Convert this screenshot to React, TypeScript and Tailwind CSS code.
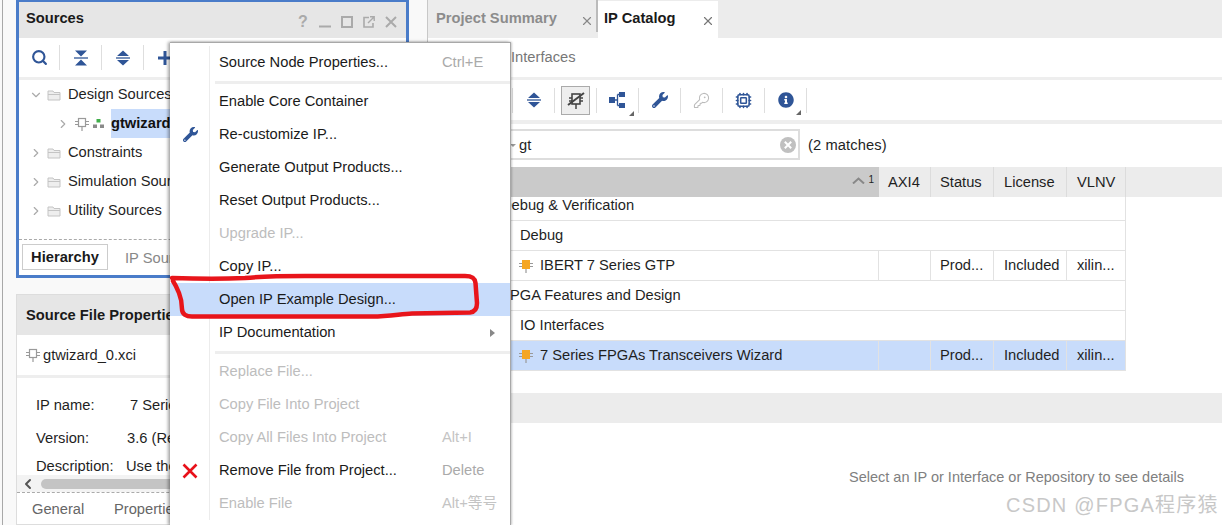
import React from "react";
import { FaWrench, FaInfoCircle } from "react-icons/fa";
import { Search, Cpu, KeyRound, ChevronRight, ChevronDown, ChevronLeft, X } from "lucide-react";

const BLUE = "#2f5597";

function IpIcon({ fill = "none", stroke = "#9a9a9a" }: { fill?: string; stroke?: string }) {
  return (
    <svg width="14" height="14" viewBox="0 0 14 14" className="shrink-0">
      <path d="M0 4.500h3M0 7.500h3M11 4.500h3M11 7.500h3M7 10v4" stroke={stroke} strokeWidth="1.2" fill="none" />
      {fill === "none" ? (
        <rect x="3.500" y="1.500" width="7" height="8" fill="none" stroke={stroke} strokeWidth="1.2" />
      ) : (
        <rect x="3" y="1" width="8" height="9" fill={fill} />
      )}
    </svg>
  );
}

function Folder() {
  return (
    <svg width="14" height="12" viewBox="0 0 14 12" className="shrink-0">
      <path d="M1 2h5l1 1.500h6V11H1z" fill="#eeeeee" stroke="#c4c4c4" strokeWidth="1" />
      <path d="M1 5.500h12" stroke="#c4c4c4" strokeWidth="1" />
    </svg>
  );
}

function Collapse() {
  return (
    <svg width="14" height="16" viewBox="0 0 14 16">
      <path d="M1 .5h12L7 6.500zM1 15.500h12L7 9.500z" fill={BLUE} />
      <path d="M0 8h14" stroke={BLUE} strokeWidth="1.3" />
    </svg>
  );
}

function Expand() {
  return (
    <svg width="14" height="16" viewBox="0 0 14 16">
      <path d="M7 .5L13 6H1zM7 15.500L13 10H1z" fill={BLUE} />
      <path d="M0 8h14" stroke={BLUE} strokeWidth="1.3" />
    </svg>
  );
}

function Plus() {
  return (
    <svg width="14" height="14" viewBox="0 0 14 14">
      <path d="M7 0v14M0 7h14" stroke={BLUE} strokeWidth="3" />
    </svg>
  );
}

function Corner() {
  return <span className="absolute right-[-7px] bottom-[-7px] w-0 h-0 border-l-[5px] border-l-transparent border-b-[5px] border-b-[#666]" />;
}

function ToolBtn({ children, w = "w-[42px]", corner }: { children?: React.ReactNode; w?: string; corner?: boolean }) {
  return (
    <div className={`${w} h-[25px] flex items-center justify-center border-r border-[#dedede] shrink-0`}>
      <div className="relative flex items-center justify-center">
        {children}
        {corner && <Corner />}
      </div>
    </div>
  );
}

function WinBtns() {
  return (
    <div className="flex items-center gap-[10px] text-[#aaaaaa] mt-[3px]">
      <span className="text-[16px] font-bold w-[12px] text-center">?</span>
      <svg width="12" height="12" viewBox="0 0 12 12"><path d="M0 10.500h12" stroke="#aaaaaa" strokeWidth="2" /></svg>
      <svg width="12" height="12" viewBox="0 0 12 12"><rect x="1" y="1" width="10" height="10" fill="none" stroke="#aaaaaa" strokeWidth="2" /></svg>
      <svg width="12" height="12" viewBox="0 0 12 12"><path d="M6 1.500H1v9.500h9V7" fill="none" stroke="#aaaaaa" strokeWidth="1.6" /><path d="M5 7l6-6M7 .8h4.200V5" fill="none" stroke="#aaaaaa" strokeWidth="1.4" /></svg>
      <svg width="12" height="12" viewBox="0 0 12 12"><path d="M1 1l10 10M11 1L1 11" stroke="#aaaaaa" strokeWidth="2" /></svg>
    </div>
  );
}

function TreeRow({ label, open }: { label: string; open?: boolean }) {
  return (
    <div className="h-[29px] flex items-center pl-[10px] whitespace-nowrap">
      {open ? <ChevronDown size={14} color="#aaaaaa" /> : <ChevronRight size={14} color="#aaaaaa" />}
      <span className="w-[4px]" />
      <Folder />
      <span className="ml-[7px]">{label}</span>
    </div>
  );
}

type Item = { t?: string; k?: string; off?: boolean; hi?: boolean; icon?: React.ReactNode; sub?: boolean; sep?: number };

const menu: Item[] = [
  { t: "Source Node Properties...", k: "Ctrl+E" },
  { sep: 6 },
  { t: "Enable Core Container" },
  { t: "Re-customize IP...", icon: <FaWrench size={15} color={BLUE} /> },
  { t: "Generate Output Products..." },
  { t: "Reset Output Products..." },
  { t: "Upgrade IP...", off: true },
  { t: "Copy IP..." },
  { t: "Open IP Example Design...", hi: true },
  { t: "IP Documentation", sub: true },
  { sep: 6 },
  { t: "Replace File...", off: true },
  { t: "Copy File Into Project", off: true },
  { t: "Copy All Files Into Project", k: "Alt+I", off: true },
  {
    t: "Remove File from Project...",
    k: "Delete",
    icon: (
      <svg width="16" height="16" viewBox="0 0 16 16">
        <path d="M1.500 1.500l13 13M14.500 1.500l-13 13" stroke="#e8111a" strokeWidth="2.6" />
      </svg>
    ),
  },
  { t: "Enable File", k: "Alt+等号", off: true },
];

function Menu() {
  return (
    <div className="absolute left-[170px] top-[42px] w-[341px] h-[483px] bg-white border-t border-r border-[#a8a8a8] shadow-[-2px_0_3px_rgba(0,0,0,0.35),1px_0_2px_rgba(0,0,0,0.2)] pt-[3px] text-[#1a1a1a]">
      {menu.map((m, i) =>
        m.sep ? (
          <div key={i} className="flex" style={{ height: m.sep }}>
            <div className="w-[40px] border-r border-[#ececec]" />
            <div className="flex-1 flex items-center pl-[5px]">
              <div className="w-full h-[3px] bg-[#eeeeee]" />
            </div>
          </div>
        ) : (
          <div key={i} className={`h-[33px] flex items-center ${m.hi ? "bg-[#c8dcfb]" : ""}`}>
            <div className={`w-[40px] h-full flex items-center justify-center pl-[1px] border-r ${m.hi ? "border-transparent" : "border-[#ececec]"}`}>
              {m.icon}
            </div>
            <span className={`ml-[9px] w-[223px] whitespace-nowrap ${m.off ? "text-[#bdbdbd]" : ""}`}>{m.t}</span>
            {m.k && <span className={`whitespace-nowrap ${m.off ? "text-[#c4c4c4]" : "text-[#aaaaaa]"}`}>{m.k}</span>}
            {m.sub && <span className="ml-auto mr-[15px] w-0 h-0 border-y-[4px] border-y-transparent border-l-[5px] border-l-[#888]" />}
          </div>
        )
      )}
    </div>
  );
}

const cols = "grid grid-cols-[451px_52px_63px_73px_59px] w-[698px]";

function Cells({ hi, prod, children }: { hi?: boolean; prod?: boolean; children: React.ReactNode }) {
  return (
    <div className={`${cols} h-[30px] border-b border-[#e2e2e2] border-r ${hi ? "bg-[#c8dcfb]" : ""}`}>
      <div className={`flex items-center whitespace-nowrap ${prod ? "border-r border-[#e2e2e2]" : ""}`}>{children}</div>
      {prod ? (
        <>
          <div className="border-r border-[#e2e2e2]" />
          <div className="flex items-center pl-[9px] border-r border-[#e2e2e2]">Prod...</div>
          <div className="flex items-center pl-[10px] border-r border-[#e2e2e2]">Included</div>
          <div className="flex items-center pl-[10px]">xilin...</div>
        </>
      ) : null}
    </div>
  );
}

export default function App() {
  return (
    <div
      className="relative w-[1222px] h-[525px] overflow-hidden flex bg-[#f9f9f9] text-[14.7px] text-[#1f1f1f]"
      style={{ fontFamily: '"Liberation Sans","Noto Sans CJK SC",sans-serif' }}
    >
      {/* left strip */}
      <div className="w-[16px] shrink-0 pl-[2px]">
        <div className="w-px h-full bg-[#a8a8a8]" />
      </div>

      {/* left column */}
      <div className="w-[393px] shrink-0 flex flex-col">
        <div className="h-[278px] bg-white border-x-[3px] border-b-[3px] border-t-[2px] border-[#4a7cc9] flex flex-col shrink-0">
          <div className="h-[36px] bg-[#e6e6e6] flex items-center justify-between pl-[7px] pr-[9px] shrink-0">
            <span className="font-bold text-[#1a1a1a] -mt-[4px]">Sources</span>
            <WinBtns />
          </div>
          <div className="h-[39px] flex items-center shrink-0">
            <ToolBtn w="w-[41px]"><Search size={17} strokeWidth={3} color={BLUE} /></ToolBtn>
            <ToolBtn><Collapse /></ToolBtn>
            <ToolBtn><Expand /></ToolBtn>
            <ToolBtn><Plus /></ToolBtn>
          </div>
          <div className="h-[3px] bg-[#eeeeee] shrink-0" />
          <div className="h-[159px] shrink-0 overflow-hidden">
            <TreeRow label="Design Sources" open />
            <div className="h-[29px] flex items-center pl-[37px] whitespace-nowrap">
              <ChevronRight size={14} color="#aaaaaa" />
              <span className="w-[5px]" />
              <IpIcon />
              <svg width="11" height="9" viewBox="0 0 11 9" className="ml-[4px]">
                <rect x="3.500" y="0" width="4" height="3.500" fill="#3fae49" />
                <rect x="0" y="5.500" width="4" height="3.500" fill="#8a8a8a" />
                <rect x="7" y="5.500" width="4" height="3.500" fill="#8a8a8a" />
              </svg>
              <span className="ml-[7px] h-full flex-1 bg-[#c8dcfb] flex items-center font-bold text-[#111]">gtwizard_0</span>
            </div>
            <TreeRow label="Constraints" />
            <TreeRow label="Simulation Sources" />
            <TreeRow label="Utility Sources" />
          </div>
          <div className="flex-1 border-t border-dashed border-[#aaaaaa] pl-[3px] pt-[4px] flex items-start">
            <div className="w-[86px] h-[26px] border border-[#cccccc] flex items-center justify-center font-bold text-[#1a1a1a]">Hierarchy</div>
            <span className="ml-[17px] mt-[3px] text-[#888888]">IP Sources</span>
          </div>
        </div>

        <div className="h-[16px] shrink-0" />

        <div className="flex-1 bg-white border border-[#dddddd] flex flex-col min-h-0">
          <div className="h-[40px] bg-[#e6e6e6] flex items-center pl-[9px] font-bold text-[#1a1a1a] shrink-0 whitespace-nowrap">Source File Properties</div>
          <div className="h-[40px] flex items-center pl-[9px] gap-[3px] shrink-0">
            <IpIcon />
            <span>gtwizard_0.xci</span>
          </div>
          <div className="h-[3px] bg-[#eeeeee] shrink-0" />
          <div className="h-[97px] shrink-0 pl-[19px] overflow-hidden">
            <div className="h-[33px] mt-[11px] flex items-center whitespace-nowrap">
              <span className="w-[94px]">IP name:</span><span>7 Series</span>
            </div>
            <div className="h-[33px] flex items-center whitespace-nowrap">
              <span className="w-[91px]">Version:</span><span>3.6 (Rev</span>
            </div>
            <div className="h-[22px] flex items-center whitespace-nowrap">
              <span className="w-[90px]">Description:</span><span>Use the</span>
            </div>
          </div>
          <div className="h-[17px] flex items-center pl-[3px] bg-[#f3f3f3] shrink-0">
            <ChevronLeft size={16} strokeWidth={3} color="#555555" />
            <div className="ml-[5px] w-[300px] h-[10px] rounded-full bg-[#c4c4c4]" />
          </div>
          <div className="flex-1 border-t border-dashed border-[#aaaaaa] flex items-center pl-[15px] pt-[2px] text-[#666666] whitespace-nowrap">
            <span className="w-[82px]">General</span><span>Properties</span>
          </div>
        </div>
      </div>

      <div className="w-[18px] shrink-0" />

      {/* right panel */}
      <div className="flex-1 min-w-0 bg-white border-l border-[#c8c8c8] flex flex-col">
        <div className="h-[38px] bg-[#ececec] flex shrink-0">
          <div className="w-[168px] flex items-center pl-[8px] justify-between pr-[2px]">
            <span className="font-bold text-[#8c8c8c] -mt-[2px]">Project Summary</span>
            <X size={14} strokeWidth={2} color="#888888" className="mt-[3px]" />
          </div>
          <div className="w-[2px] h-[32px] bg-[#bbbbbb]" />
          <div className="w-[120px] mt-[1px] bg-white flex items-center pl-[6px] justify-between pr-[3px]">
            <span className="font-bold text-[#1a1a1a] -mt-[3px]">IP Catalog</span>
            <X size={14} strokeWidth={2} color="#777777" className="mt-[2px]" />
          </div>
        </div>
        <div className="h-[39px] flex items-center pl-[83px] shrink-0 text-[#777777]">
          <span>Interfaces</span>
        </div>
        <div className="h-[3px] bg-[#eeeeee] shrink-0" />
        <div className="h-[40px] flex items-center pl-[1px] shrink-0">
          <ToolBtn><Search size={17} strokeWidth={3} color={BLUE} /></ToolBtn>
          <ToolBtn><Collapse /></ToolBtn>
          <ToolBtn><Expand /></ToolBtn>
          <div className="w-[42px] h-[25px] flex items-center justify-center border-r border-[#dedede] shrink-0">
            <div className="w-[29px] h-[29px] bg-[#eeeeee] border border-[#aaaaaa] flex items-center justify-center">
              <svg width="20" height="20" viewBox="0 0 20 20">
                <path d="M3 8h3M3 11h3M14 8h3M14 11h3M10 14v5" stroke="#444" strokeWidth="1.5" fill="none" />
                <rect x="6" y="4" width="8" height="10" fill="none" stroke="#444" strokeWidth="1.6" />
                <path d="M2 15L18 3" stroke="#444" strokeWidth="2" />
              </svg>
            </div>
          </div>
          <ToolBtn corner>
            <svg width="18" height="18" viewBox="0 0 18 18">
              <rect x="0" y="6" width="6" height="6" fill={BLUE} />
              <rect x="10" y="1" width="6" height="5" fill={BLUE} />
              <rect x="10" y="12" width="6" height="5" fill={BLUE} />
              <path d="M6 9h2.500M8.500 3.500v11M8.500 3.500H10M8.500 14.500H10" stroke={BLUE} strokeWidth="1.3" fill="none" />
            </svg>
          </ToolBtn>
          <ToolBtn><FaWrench size={16} color={BLUE} /></ToolBtn>
          <ToolBtn><KeyRound size={17} strokeWidth={1.5} color="#bbbbbb" /></ToolBtn>
          <ToolBtn><Cpu size={17} strokeWidth={2.2} color={BLUE} /></ToolBtn>
          <ToolBtn corner><FaInfoCircle size={16} color={BLUE} /></ToolBtn>
        </div>
        <div className="h-[4px] bg-[#eeeeee] shrink-0" />
        <div className="h-[43px] flex items-start pt-[5px] pl-[1px] shrink-0">
          <div className="w-[371px] h-[31px] border-2 border-[#dddddd] flex items-center pl-[79px] pr-[2px] pt-[1px]">
            <span className="w-0 h-0 border-x-[3px] border-x-transparent border-t-[3px] border-t-[#999] mr-[3px]" />
            <span className="flex-1">gt</span>
            <svg width="16" height="16" viewBox="0 0 16 16">
              <circle cx="8" cy="8" r="8" fill="#c0c0c0" />
              <path d="M4.800 4.800l6.400 6.400M11.200 4.800l-6.400 6.400" stroke="#fff" strokeWidth="2" />
            </svg>
          </div>
          <span className="ml-[8px] mt-[5px] tracking-[0.1px]">(2 matches)</span>
        </div>
        {/* table header */}
        <div className="h-[30px] bg-[#ececec] flex shrink-0">
          <div className={cols}>
            <div className="bg-[#cacaca] flex items-center justify-end pr-[5px]">
              <svg width="13" height="7" viewBox="0 0 13 7" className="mr-[3px] -mt-[3px]"><path d="M1 6.500l5.500-5 5.500 5" fill="none" stroke="#888" strokeWidth="2" /></svg>
              <span className="text-[10px] -mt-[5px]">1</span>
            </div>
            <div className="flex items-center pl-[9px] border-r border-[#dcdcdc]">AXI4</div>
            <div className="flex items-center pl-[9px] border-r border-[#dcdcdc]">Status</div>
            <div className="flex items-center pl-[10px] border-r border-[#dcdcdc]">License</div>
            <div className="flex items-center pl-[10px] border-r border-[#dcdcdc]">VLNV</div>
          </div>
        </div>
        <div className="h-[24px] w-[698px] border-b border-r border-[#e2e2e2] flex items-center pl-[73px] pb-[7px] whitespace-nowrap shrink-0">Debug &amp; Verification</div>
        <Cells><span className="pl-[92px]">Debug</span></Cells>
        <Cells prod>
          <span className="pl-[91px]"><IpIcon fill="#f5a623" /></span>
          <span className="ml-[7px]">IBERT 7 Series GTP</span>
        </Cells>
        <Cells><span className="pl-[73px]">FPGA Features and Design</span></Cells>
        <Cells><span className="pl-[92px]">IO Interfaces</span></Cells>
        <Cells prod hi>
          <span className="pl-[91px]"><IpIcon fill="#f5a623" /></span>
          <span className="ml-[7px]">7 Series FPGAs Transceivers Wizard</span>
        </Cells>
        <div className="h-[22px] shrink-0" />
        <div className="h-[30px] bg-[#ececec] shrink-0" />
        <div className="flex-1 pt-[44px] pl-[421px] text-[14.500px] text-[#808080] whitespace-nowrap">Select an IP or Interface or Repository to see details</div>
      </div>

      <Menu />

      {/* red hand-drawn outline */}
      <svg className="absolute left-0 top-0 pointer-events-none" width="1222" height="525" viewBox="0 0 1222 525">
        <path
          d="M172 278 C200 279 225 279 245 278 C265 276 285 276 305 276 L465 276 C472 276 475 278 475.500 283 L477 303 C477 309 475 312 470 312.500 L412 313.500 C400 314 390 316.500 372 316.500 L192 316.500 C186 316.500 182 314 182 309 C182 302 181 298 179 293 C177 288 175 284 173 281"
          fill="none"
          stroke="#e8151b"
          strokeWidth="4.500"
          strokeLinecap="round"
        />
      </svg>

      {/* watermark */}
      <div className="absolute left-[1006px] top-[492px] text-[20px] leading-[26px] text-[#c8c8c8] whitespace-nowrap tracking-[1.2px]">CSDN @FPGA程序猿</div>
    </div>
  );
}
